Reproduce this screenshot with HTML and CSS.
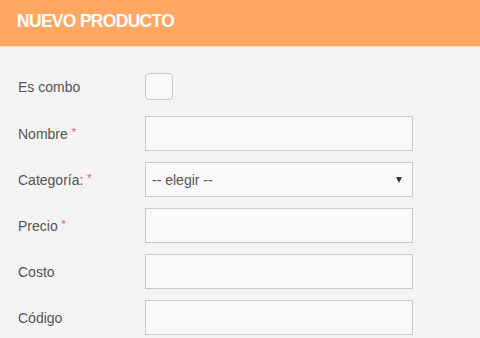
FILE: index.html
```html
<!DOCTYPE html>
<html lang="es">
<head>
  <meta charset="UTF-8" />
  <title>Nuevo producto</title>
  <link rel="stylesheet" href="styles.css">
</head>
<body>
  <div class="cabecera">NUEVO PRODUCTO</div>

  <form class="formulario">
    <div class="fila fila-combo">
      <label>Es combo</label>
      <input type="checkbox" class="check" />
    </div>

    <div class="fila">
      <label>Nombre <span class="req">*</span></label>
      <input type="text" class="campo" />
    </div>

    <div class="fila">
      <label>Categoría: <span class="req">*</span></label>
      <div class="select-wrap">
        <select class="campo">
          <option>-- elegir --</option>
        </select>
      </div>
    </div>

    <div class="fila">
      <label>Precio <span class="req">*</span></label>
      <input type="text" class="campo" />
    </div>

    <div class="fila">
      <label>Costo</label>
      <input type="text" class="campo" />
    </div>

    <div class="fila">
      <label>Código</label>
      <input type="text" class="campo" />
    </div>
  </form>
</body>
</html>
```

FILE: styles.css
```css
body {
  margin: 0;
  background: #f4f4f4;
  font-family: "Liberation Sans", Arial, sans-serif;
  overflow: hidden;
}
.cabecera {
  height: 42px;
  line-height: 42px;
  padding-left: 17px;
  padding-bottom: 4px;
  background: #ffa763;
  border-bottom: 1px solid #ffe0c6;
  color: white;
  font-size: 17.5px;
  font-weight: bold;
  letter-spacing: -0.7px;
}
.formulario {
  padding: 26px 18px 0;
}
.fila {
  display: grid;
  grid-template-columns: 127px 268px;
  align-items: center;
  margin-bottom: 11px;
}
.fila-combo {
  margin-bottom: 16px;
}
.fila label {
  font-size: 14px;
  color: #555;
}
.req {
  color: #e8554e;
  font-size: 11px;
  vertical-align: 3px;
}
.check {
  appearance: none;
  margin: 0;
  width: 28px;
  height: 27px;
  border: 1px solid #c8c8c8;
  border-radius: 4px;
  background: #f9f9f9;
  box-sizing: border-box;
}
.campo {
  appearance: none;
  width: 268px;
  height: 35px;
  margin: 0;
  padding: 0 6px;
  border: 1px solid #cacaca;
  border-radius: 0;
  background: #f9f9f9;
  box-sizing: border-box;
  font-family: "Liberation Sans", Arial, sans-serif;
  font-size: 14px;
  color: #555;
}
.select-wrap {
  position: relative;
}
.select-wrap::after {
  content: "";
  position: absolute;
  right: 11px;
  top: 15px;
  border-left: 3.5px solid transparent;
  border-right: 3.5px solid transparent;
  border-top: 6px solid #333;
}
```
